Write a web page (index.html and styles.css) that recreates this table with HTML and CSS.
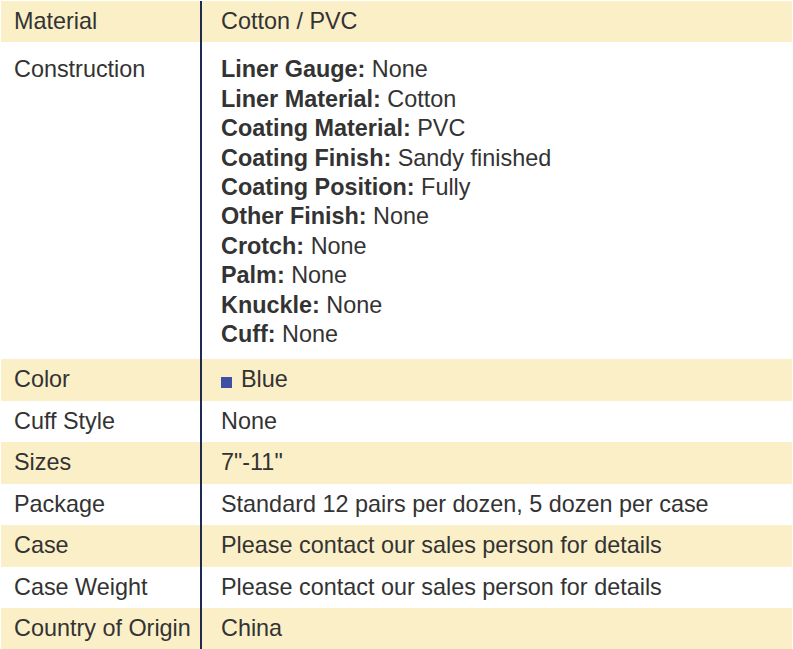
FILE: index.html
```html
<!DOCTYPE html>
<html>
<head>
<meta charset="utf-8">
<link rel="stylesheet" href="styles.css">
</head>
<body>
<div class="spec">
  <div class="row alt"><div class="key">Material</div><div class="val">Cotton / PVC</div></div>
  <div class="row tall">
    <div class="key">Construction</div>
    <div class="val">
      <div><b>Liner Gauge:</b> None</div>
      <div><b>Liner Material:</b> Cotton</div>
      <div><b>Coating Material:</b> PVC</div>
      <div><b>Coating Finish:</b> Sandy finished</div>
      <div><b>Coating Position:</b> Fully</div>
      <div><b>Other Finish:</b> None</div>
      <div><b>Crotch:</b> None</div>
      <div><b>Palm:</b> None</div>
      <div><b>Knuckle:</b> None</div>
      <div><b>Cuff:</b> None</div>
    </div>
  </div>
  <div class="row alt"><div class="key">Color</div><div class="val"><span class="swatch"></span>Blue</div></div>
  <div class="row"><div class="key">Cuff Style</div><div class="val">None</div></div>
  <div class="row alt"><div class="key">Sizes</div><div class="val">7"-11"</div></div>
  <div class="row"><div class="key">Package</div><div class="val">Standard 12 pairs per dozen, 5 dozen per case</div></div>
  <div class="row alt"><div class="key">Case</div><div class="val">Please contact our sales person for details</div></div>
  <div class="row"><div class="key">Case Weight</div><div class="val">Please contact our sales person for details</div></div>
  <div class="row alt"><div class="key">Country of Origin</div><div class="val">China</div></div>
</div>
</body>
</html>
```
FILE: styles.css
```css
html, body {
  margin: 0;
  padding: 0;
  background: #fff;
}
body {
  padding: 1px;
}
.spec {
  width: 791px;
  font-family: "Liberation Sans", Arial, sans-serif;
  font-size: 23.4px;
  line-height: 29.4px;
  color: #333;
}
.row {
  display: grid;
  grid-template-columns: 201px 1fr;
}
.row.alt {
  background: #fbefc8;
}
.key {
  padding: 6px 0 6px 13px;
  border-right: 2px solid #1d2b4f;
  white-space: nowrap;
}
.val {
  padding: 6px 0 6px 19px;
}
.tall .key, .tall .val {
  padding-top: 13px;
  padding-bottom: 10px;
}
.val b {
  font-weight: bold;
}
.swatch {
  display: inline-block;
  width: 11px;
  height: 11px;
  background: #3f4fa6;
  margin-right: 9px;
  vertical-align: -1px;
}
```
